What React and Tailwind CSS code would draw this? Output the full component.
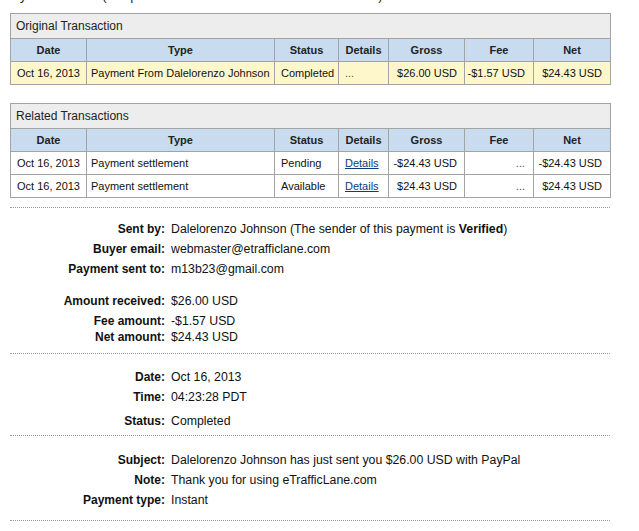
import React from "react";

const cols = [76, 188, 64, 50, 76, 69, 77];
const headers = ["Date", "Type", "Status", "Details", "Gross", "Fee", "Net"];

function Table({ title, rows, yellow }) {
  return (
    <table className="border-collapse table-fixed w-[600px] text-[11px]">
      <colgroup>
        {cols.map((w, i) => (
          <col key={i} style={{ width: w }} />
        ))}
      </colgroup>
      <tbody>
        <tr>
          <td colSpan={7} className="h-[25px] border border-[#a3a3a3] bg-[#ededed] pl-[5px] text-[12px] text-[#222] align-middle">
            {title}
          </td>
        </tr>
        <tr>
          {headers.map((h) => (
            <td key={h} className="h-[23px] border border-[#a3a3a3] bg-[#c9dbee] text-center font-bold text-[#222] align-middle">
              {h}
            </td>
          ))}
        </tr>
        {rows.map((r, i) => (
          <tr key={i} className={yellow ? "bg-[#fff7cc]" : "bg-white"}>
            <td className="h-[23px] border border-[#a3a3a3] text-center text-[#111]">{r[0]}</td>
            <td className="border border-[#a3a3a3] pl-[4px] text-[#111]">{r[1]}</td>
            <td className="border border-[#a3a3a3] pl-[6px] text-[#111]">{r[2]}</td>
            <td className="border border-[#a3a3a3] pl-[6px] text-[#111]">
              {r[3] === "..." ? (
                <span className="text-[#555]">...</span>
              ) : (
                <span className="text-[#0b3d7a] underline">{r[3]}</span>
              )}
            </td>
            <td className="border border-[#a3a3a3] pr-[7px] text-right text-[#111]">{r[4]}</td>
            <td className="border border-[#a3a3a3] pr-[8px] text-right text-[#111]">
              {r[5] === "..." ? <span className="text-[#555]">...</span> : r[5]}
            </td>
            <td className="border border-[#a3a3a3] pr-[8px] text-right text-[#111]">{r[6]}</td>
          </tr>
        ))}
      </tbody>
    </table>
  );
}

function Dots({ className = "" }) {
  return <div className={"w-[600px] border-t border-dotted border-[#9a9a9a] " + className} />;
}

function Row({ label, children, h = "h-[20px] leading-[20px]", className = "" }) {
  return (
    <div className={"flex " + h + " " + className}>
      <div className="w-[165px] shrink-0 text-right font-bold text-[12px] text-[#111]">{label}</div>
      <div className="pl-[6px] text-[12.3px] text-[#111] whitespace-nowrap">{children}</div>
    </div>
  );
}

export default function App() {
  return (
    <div
      className="w-[639px] h-[531px] overflow-hidden bg-white relative"
      style={{ fontFamily: '"Liberation Sans", Arial, sans-serif' }}
    >
      <div className="h-[4px] overflow-hidden pl-[4px]">
        <div className="-mt-[12px] text-[13px] leading-[15px] text-[#222] whitespace-nowrap">
          Payment Details (Unique Transaction ID #8BD74915MR8720531)
        </div>
      </div>
      <div className="pl-[10px] pt-[9px]">
        <Table
          title="Original Transaction"
          yellow
          rows={[["Oct 16, 2013", "Payment From Dalelorenzo Johnson", "Completed", "...", "$26.00 USD", "-$1.57 USD", "$24.43 USD"]]}
        />
        <div className="h-[18px]" />
        <Table
          title="Related Transactions"
          rows={[
            ["Oct 16, 2013", "Payment settlement", "Pending", "Details", "-$24.43 USD", "...", "-$24.43 USD"],
            ["Oct 16, 2013", "Payment settlement", "Available", "Details", "$24.43 USD", "...", "$24.43 USD"],
          ]}
        />
        <Dots className="mt-[9px]" />
      </div>
      <div>
        <Row label="Sent by:" className="mt-[11px]">
          Dalelorenzo Johnson (The sender of this payment is <b>Verified</b>)
        </Row>
        <Row label="Buyer email:">webmaster@etrafficlane.com</Row>
        <Row label="Payment sent to:">m13b23@gmail.com</Row>
        <Row label="Amount received:" className="mt-[12px]">$26.00 USD</Row>
        <Row label="Fee amount:" h="h-[16px] leading-[16px]" className="mt-[2px]">-$1.57 USD</Row>
        <Row label="Net amount:" h="h-[16px] leading-[16px]">$24.43 USD</Row>
      </div>
      <div className="pl-[10px]">
        <Dots className="mt-[8px]" />
      </div>
      <div>
        <Row label="Date:" className="mt-[13px]">Oct 16, 2013</Row>
        <Row label="Time:">04:23:28 PDT</Row>
        <Row label="Status:" className="mt-[4px]">Completed</Row>
      </div>
      <div className="pl-[10px]">
        <Dots className="mt-[4px]" />
      </div>
      <div>
        <Row label="Subject:" className="mt-[14px]">
          Dalelorenzo Johnson has just sent you $26.00 USD with PayPal
        </Row>
        <Row label="Note:">Thank you for using eTrafficLane.com</Row>
        <Row label="Payment type:">Instant</Row>
      </div>
      <div className="pl-[10px]">
        <Dots className="mt-[10px]" />
      </div>
    </div>
  );
}
